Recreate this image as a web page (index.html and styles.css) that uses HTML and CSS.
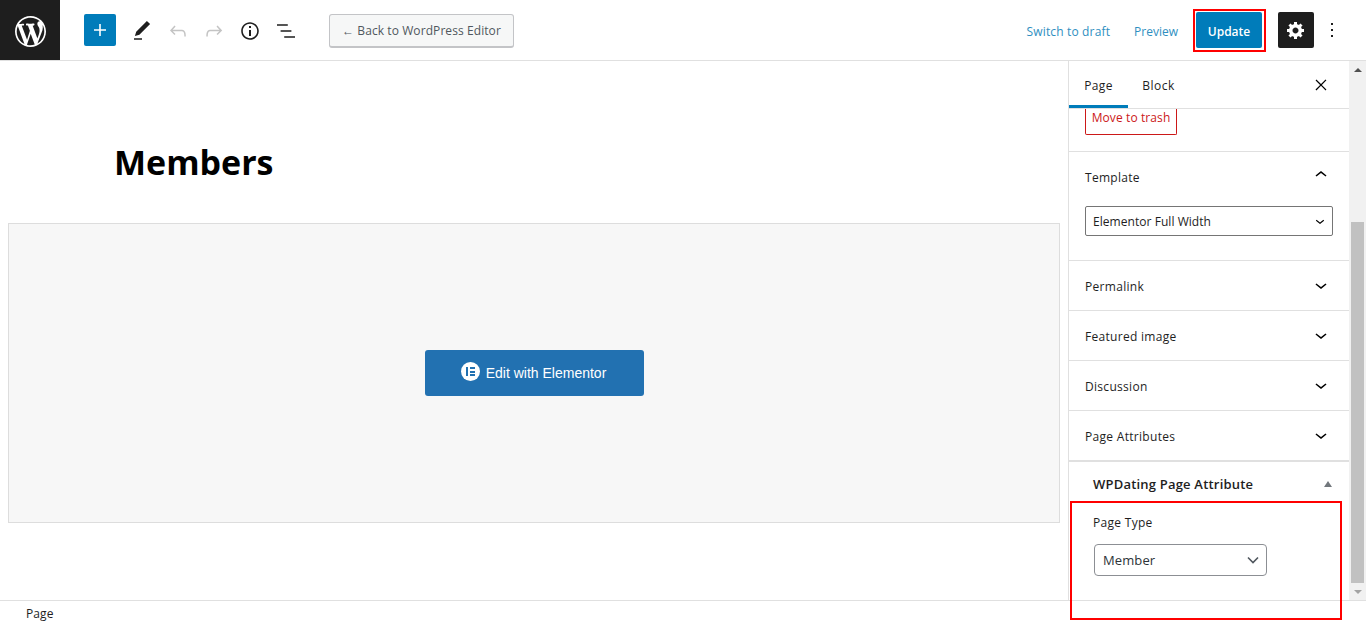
FILE: index.html
```html
<!DOCTYPE html>
<html lang="en">
<head>
<meta charset="utf-8">
<title>Edit Page</title>
<link rel="stylesheet" href="styles.css">
</head>
<body>
<div class="app">
  <header class="topbar">
    <a class="logo"><svg viewBox="0 0 20 20" width="31" height="31"><path fill="#fff" d="M20 10c0-5.51-4.49-10-10-10C4.48 0 0 4.49 0 10c0 5.52 4.48 10 10 10 5.51 0 10-4.48 10-10zM7.78 15.37L4.37 6.22c.55-.02 1.17-.08 1.17-.08.5-.06.44-1.13-.06-1.11 0 0-1.45.11-2.37.11-.18 0-.37 0-.58-.01C4.12 2.69 6.87 1.11 10 1.11c2.33 0 4.45.87 6.05 2.34-.68-.11-1.65.39-1.65 1.58 0 .74.45 1.36.9 2.1.35.61.55 1.36.55 2.46 0 1.49-1.4 5-1.4 5l-3.03-8.37c.54-.02.82-.17.82-.17.5-.05.44-1.25-.06-1.22 0 0-1.44.12-2.38.12-.87 0-2.33-.12-2.33-.12-.5-.03-.56 1.2-.06 1.22l.92.08 1.26 3.41zM17.41 10c.24-.64.74-1.87.43-4.25.7 1.29 1.05 2.71 1.05 4.25 0 3.29-1.73 6.24-4.4 7.78.97-2.59 1.94-5.2 2.92-7.78zM6.1 18.09C3.12 16.65 1.11 13.53 1.11 10c0-1.3.23-2.48.72-3.59C3.25 10.3 4.67 14.2 6.1 18.09zm4.03-6.63l2.58 6.98c-.86.29-1.76.45-2.71.45-.79 0-1.57-.11-2.29-.33.81-2.38 1.62-4.74 2.42-7.1z"/></svg></a>
    <div class="tools">
      <span class="add"><svg viewBox="0 0 24 24" width="24" height="24"><path fill="#fff" d="M18 11.2h-5.2V6h-1.6v5.2H6v1.6h5.2V18h1.6v-5.2H18z"/></svg></span>
      <span class="tool"><svg viewBox="0 0 24 24" width="24" height="24"><path d="M20.1 5.1L16.9 2 6.2 12.7l-1.3 4.4 4.5-1.3L20.1 5.1zM4 20.8h8v-1.5H4v1.5z"/></svg></span>
      <span class="tool off"><svg viewBox="0 0 24 24" width="24" height="24"><path d="M18.3 11.7c-.6-.6-1.4-.9-2.3-.9H6.7l2.9-3.3-1.1-1-4.5 5L8.5 16l1-1-2.7-2.7H16c.5 0 .9.2 1.3.5 1 1 1 3.4 1 4.5v.3h1.5v-.2c0-1.5 0-4.3-1.5-5.7z"/></svg></span>
      <span class="tool off"><svg viewBox="0 0 24 24" width="24" height="24"><path d="M15.6 6.5l-1.1 1 2.9 3.3H8c-.9 0-1.7.3-2.3.9-1.4 1.5-1.4 4.2-1.4 5.6v.2h1.5v-.3c0-1.1 0-3.5 1-4.5.3-.3.7-.5 1.3-.5h9.2L14.5 15l1.1 1.1 4.6-4.6-4.6-5z"/></svg></span>
      <span class="tool"><svg viewBox="0 0 24 24" width="24" height="24"><path d="M12 3.2c-4.8 0-8.8 3.9-8.8 8.8 0 4.8 3.9 8.8 8.8 8.8 4.8 0 8.8-3.9 8.8-8.8 0-4.8-4-8.8-8.8-8.8zm0 16c-4 0-7.2-3.3-7.2-7.2C4.8 8 8 4.8 12 4.8s7.2 3.3 7.2 7.2c0 4-3.2 7.2-7.2 7.2zM11 17h2v-6h-2v6zm0-8h2V7h-2v2z"/></svg></span>
      <span class="tool"><svg viewBox="0 0 24 24" width="24" height="24"><path d="M13.8 5.2H3v1.5h10.8V5.2zm-3.6 12v1.5H21v-1.5H10.2zm7.2-6H6.6v1.5h10.8v-1.5z"/></svg></span>
    </div>
    <button class="back">← Back to WordPress Editor</button>
    <div class="actions">
      <a class="link">Switch to draft</a>
      <a class="link">Preview</a>
      <button class="update">Update</button>
      <span class="cog"><svg viewBox="0 0 20 20" width="20" height="20"><path fill="#fff" d="M18 12h-2.18c-.17.7-.44 1.35-.81 1.93l1.54 1.54-2.1 2.1-1.54-1.54c-.58.36-1.23.63-1.91.79V19H8v-2.18c-.68-.16-1.33-.43-1.91-.79l-1.54 1.54-2.12-2.12 1.54-1.54c-.36-.58-.63-1.23-.79-1.91H1V9.03h2.17c.16-.7.44-1.35.8-1.94L2.43 5.55l2.1-2.1 1.54 1.54c.58-.37 1.24-.64 1.93-.81V2h3v2.18c.68.16 1.33.43 1.91.79l1.54-1.54 2.12 2.12-1.54 1.54c.36.59.64 1.24.8 1.94H18V12zm-8.5 1.5c1.66 0 3-1.34 3-3s-1.34-3-3-3-3 1.34-3 3 1.34 3 3 3z"/></svg></span>
      <span class="more"><svg viewBox="0 0 24 24" width="24" height="24"><path d="M13 19h-2v-2h2v2zm0-6h-2v-2h2v2zm0-6h-2V5h2v2z"/></svg></span>
    </div>
  </header>
  <div class="middle">
    <main class="editor">
      <h1 class="title">Members</h1>
      <div class="elementor">
        <button class="edit"><span class="eicon"><span class="e-bar"></span><span class="e-lines"><i></i><i></i><i></i></span></span>Edit with Elementor</button>
      </div>
    </main>
    <aside class="sidebar">
      <div class="tabs">
        <span class="tab active">Page</span>
        <span class="tab">Block</span>
        <span class="close"><svg viewBox="0 0 24 24" width="20" height="20"><path d="M13 11.9l5.5-5.5-1.1-1L12 10.9 6.5 5.5l-1 1 5.4 5.4-5.5 5.5 1.1 1.1 5.5-5.5 5.5 5.5 1-1.1z"/></svg></span>
      </div>
      <div class="panel trash-panel"><a class="trash">Move to trash</a></div>
      <section class="panel template">
        <div class="row head"><span>Template</span><svg class="chev-up" viewBox="0 0 24 24" width="24" height="24"><path d="M6.5 12.4L12 8l5.5 4.4-.9 1.2L12 10l-4.5 3.6-1-1.2z"/></svg></div>
        <div class="fake-select"><span>Elementor Full Width</span><svg viewBox="0 0 24 24" width="18" height="18"><path d="M17.5 11.6L12 16l-5.5-4.4.9-1.2L12 14l4.5-3.6 1 1.2z"/></svg></div>
      </section>
      <div class="panel row closed"><span>Permalink</span><svg viewBox="0 0 24 24" width="24" height="24"><path d="M17.5 11.6L12 16l-5.5-4.4.9-1.2L12 14l4.5-3.6 1 1.2z"/></svg></div>
      <div class="panel row closed"><span>Featured image</span><svg viewBox="0 0 24 24" width="24" height="24"><path d="M17.5 11.6L12 16l-5.5-4.4.9-1.2L12 14l4.5-3.6 1 1.2z"/></svg></div>
      <div class="panel row closed"><span>Discussion</span><svg viewBox="0 0 24 24" width="24" height="24"><path d="M17.5 11.6L12 16l-5.5-4.4.9-1.2L12 14l4.5-3.6 1 1.2z"/></svg></div>
      <div class="panel row closed"><span>Page Attributes</span><svg viewBox="0 0 24 24" width="24" height="24"><path d="M17.5 11.6L12 16l-5.5-4.4.9-1.2L12 14l4.5-3.6 1 1.2z"/></svg></div>
      <section class="wpdating">
        <div class="wp-head"><span>WPDating Page Attribute</span><i class="tri"></i></div>
        <label class="wp-label">Page Type</label>
        <div class="member"><span>Member</span><svg viewBox="0 0 16 16" width="16" height="16"><path fill="none" stroke="#50575e" stroke-width="1.6" d="M3 5.5l5 5 5-5"/></svg></div>
      </section>
    </aside>
    <div class="scrollbar">
      <i class="arrow up"></i>
      <div class="track"><div class="thumb"></div></div>
      <i class="arrow down"></i>
    </div>
  </div>
  <footer class="footer">Page</footer>
  <div class="mark mark-update"></div>
  <div class="mark mark-type"></div>
</div>
</body>
</html>
```
FILE: styles.css
```css
* { box-sizing: border-box; }
html, body { margin: 0; height: 100%; overflow: hidden; background: #fff; }
body { font-family: "Open Sans", "Noto Sans", sans-serif; font-size: 12px; color: #1e1e1e; }
.app { position: relative; display: flex; flex-direction: column; width: 1366px; height: 625px; }

.topbar { display: flex; align-items: center; height: 61px; flex: none; border-bottom: 1px solid #e0e0e0; }
.logo { display: flex; align-items: center; justify-content: center; width: 60px; height: 60px; padding-top: 2px; background: #1e1e1e; }
.tools { display: flex; align-items: center; margin-left: 24px; }
.add { display: flex; align-items: center; justify-content: center; width: 32px; height: 32px; background: #007cba; border-radius: 2px; margin-right: 8px; }
.tool { display: flex; align-items: center; justify-content: center; width: 36px; height: 36px; margin-top: 2px; }
.tool svg { fill: #1e1e1e; }
.tool.off svg { fill: #c4c4c4; }
.back { margin: 2px 0 0 25px; width: 185px; height: 34px; padding: 0; background: #f6f7f7; border: 1px solid #c3c4c7; border-bottom-width: 2px; border-radius: 3px; color: #50575e; font: 12px "Open Sans", sans-serif; letter-spacing: .08px; }
.actions { display: flex; align-items: center; margin-left: auto; height: 60px; }
.link { color: #2f8fc1; margin-right: 24px; padding-top: 2px; }
.link:nth-child(1) { letter-spacing: .15px; }
.link:nth-child(2) { margin-right: 18px; }
.update { width: 66px; height: 36px; padding: 2px 0 0; background: #007cba; border: 0; border-radius: 2px; color: #fff; font: 600 12px "Open Sans", sans-serif; }
.cog { display: flex; align-items: center; justify-content: center; width: 36px; height: 36px; margin-left: 16px; background: #1e1e1e; border-radius: 2px; }
.more { display: flex; align-items: center; justify-content: center; width: 24px; height: 36px; margin: 0 22px 0 6px; }
.more svg { fill: #1e1e1e; }

.middle { display: flex; flex: 1; min-height: 0; }
.editor { width: 1068px; flex: none; padding: 0 8px; }
.title { margin: 0; padding: 75px 0 0 106px; height: 162px; font: 700 34px/52px "Open Sans", sans-serif; color: #000; }
.elementor { display: flex; align-items: center; justify-content: center; width: 1052px; height: 300px; background: #f7f7f7; border: 1px solid #ddd; }
.edit { display: flex; align-items: center; justify-content: center; gap: 6px; width: 219px; height: 46px; padding: 0 1px 0 0; background: #2271b1; border: 0; border-radius: 3px; color: #fff; font: 14px "Liberation Sans", Arial, sans-serif; }
.eicon { display: flex; align-items: center; justify-content: center; gap: 2px; width: 19px; height: 19px; border-radius: 50%; background: #fff; margin-top: -3px; }
.e-bar { width: 2px; height: 9px; background: #2271b1; }
.e-lines { display: flex; flex-direction: column; justify-content: space-between; height: 9px; }
.e-lines i { display: block; width: 5px; height: 2px; background: #2271b1; }

.sidebar { width: 281px; flex: none; border-left: 1px solid #e0e0e0; overflow: hidden; }
.tabs { display: flex; align-items: stretch; height: 48px; border-bottom: 1px solid #e0e0e0; }
.tab { display: flex; align-items: center; justify-content: center; height: 47px; padding-top: 2px; letter-spacing: .3px; }
.tab:nth-child(1) { width: 59px; color: #1e1e1e; box-shadow: inset 0 -3px 0 #007cba; }
.tab:nth-child(2) { width: 60px; padding-left: 1px; letter-spacing: .5px; }
.close { display: flex; align-items: center; margin-left: auto; margin-right: 18px; }
.panel { border-bottom: 1px solid #e0e0e0; }
.trash-panel { display: flex; align-items: flex-start; height: 43px; padding-left: 16px; }
.trash { display: flex; align-items: center; justify-content: center; width: 92px; height: 26px; border: 1px solid #cc1818; border-top: 0; border-radius: 0 0 2px 2px; color: #cc1818; padding-bottom: 8px; letter-spacing: .1px; }
.row { display: flex; align-items: center; justify-content: space-between; padding: 0 16px; font-weight: 500; letter-spacing: .3px; }
.template { height: 109px; }
.head { height: 50px; }
.chev-up { margin-top: -4px; }
.closed { height: 50px; padding-top: 1px; }
.closed svg { margin-top: -3px; }
.fake-select { display: flex; align-items: center; justify-content: space-between; height: 30px; margin: 4px 16px 0; padding: 0 3px 0 7px; border: 1px solid #757575; border-radius: 2px; letter-spacing: .05px; }

.wpdating { border-top: 1px solid #e0e0e0; }
.wp-head { display: flex; align-items: center; justify-content: space-between; height: 44px; padding: 0 16px 2px 24px; font-size: 13px; font-weight: 600; letter-spacing: .2px; margin-top: 1px; }
.tri { width: 0; height: 0; border: 4px solid transparent; border-top: 0; border-bottom: 6px solid #72777c; margin-right: 1px; }
.wp-label { display: block; margin: 8px 0 0 24px; line-height: 16px; font-weight: 500; letter-spacing: .3px; }
.member { display: flex; align-items: center; justify-content: space-between; width: 173px; height: 32px; margin: 13px 0 0 25px; padding: 0 5px 0 8px; border: 1px solid #8c8f94; border-radius: 4px; color: #2c3338; font-size: 13px; letter-spacing: .1px; }

.scrollbar { display: flex; flex-direction: column; width: 17px; flex: none; background: #f1f1f1; }
.arrow { display: flex; flex: none; height: 17px; align-items: center; justify-content: center; }
.arrow::before { content: ""; border: 4px solid transparent; }
.up::before { border-top: 0; border-bottom-color: #505050; }
.down::before { border-bottom: 0; border-top-color: #a3a3a3; }
.track { flex: 1; display: flex; flex-direction: column; justify-content: flex-end; padding: 0 2px; }
.thumb { height: 361px; background: #c1c1c1; }

.footer { display: flex; align-items: center; height: 25px; flex: none; padding-left: 26px; border-top: 1px solid #e0e0e0; color: #1e1e1e; letter-spacing: .1px; }

.mark { position: absolute; border: 2px solid #f00; pointer-events: none; }
.mark-update { left: 1193px; top: 9px; width: 73px; height: 43px; }
.mark-type { left: 1070px; top: 501px; width: 272px; height: 119px; }
```
